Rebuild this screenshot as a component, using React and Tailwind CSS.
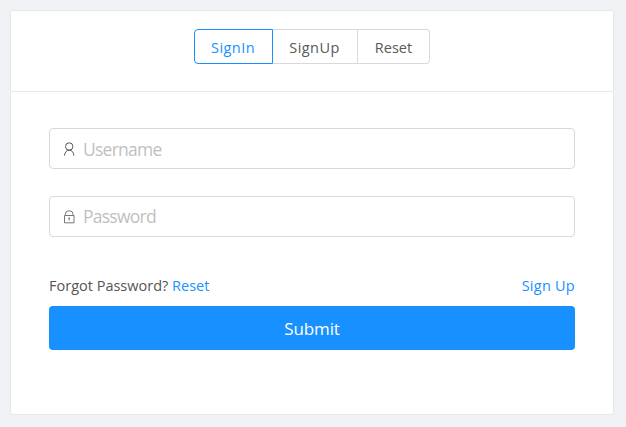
function UserIcon() {
  return (
    <svg className="h-[14px] w-[12px] shrink-0" viewBox="0 0 12 14" fill="none" stroke="#555" strokeWidth="1">
      <circle cx="6.200" cy="4.500" r="3.700" />
      <path d="M1.500 13.600C1.700 10.400 3.400 8.200 6.200 8.200s4.500 2.200 4.700 5.400" />
    </svg>
  );
}

function LockIcon() {
  return (
    <svg className="h-[14px] w-[12px] shrink-0" viewBox="0 0 12 14" fill="none" stroke="#777" strokeWidth="1">
      <path d="M1.500 5.500h9.500v7.300h-9.500z" />
      <path d="M2.300 5.500V4.600a3.900 3.900 0 0 1 7.800 0v0.900M6.200 8v2.600" />
      <path d="M5.400 8h1.600" />
    </svg>
  );
}

function Field({ icon, textClass, children }) {
  return (
    <div className="flex h-[41px] items-center rounded-[4px] border border-[#d9d9d9] pl-[13px]">
      {icon}
      <span className={`ml-2 text-[17.500px] leading-none tracking-[-0.750px] text-[#bfbfbf] ${textClass}`}>{children}</span>
    </div>
  );
}

export default function App() {
  return (
    <div className="h-[427px] w-[626px] bg-[#f0f2f5] pt-[10px] pl-[10px] font-['Open_Sans','Noto_Sans',sans-serif]">
      <div className="h-[405px] w-[604px] rounded-[2px] border border-[#e8e8e8] bg-white">
        <div className="flex h-[81px] justify-center border-b border-[#e8e8e8] pt-[18px] pr-[1px] text-[14.500px] font-medium tracking-[0.450px] text-[#595959]">
          <button className="h-[35px] w-[79px] rounded-l-[4px] border border-[#1890ff] pt-[3px] text-[#1890ff]">SignIn</button>
          <button className="h-[35px] w-[85px] border-y border-r border-[#d9d9d9] pt-[3px]">SignUp</button>
          <button className="h-[35px] w-[72px] rounded-r-[4px] border-y border-r border-[#d9d9d9] pt-[3px] pl-px tracking-[0]">Reset</button>
        </div>
        <div className="px-[38px] pt-[36px]">
          <Field icon={<UserIcon />} textClass="pt-[2px]">Username</Field>
          <div className="h-[27px]" />
          <Field icon={<LockIcon />} textClass="pt-0">Password</Field>
          <div className="mt-[38px] flex h-[22px] justify-between text-[14.500px] leading-[22px] text-[#555]">
            <span>Forgot Password? <a className="text-[#1890ff]">Reset</a></span>
            <a className="tracking-[0.250px] text-[#1890ff]">Sign Up</a>
          </div>
          <button className="mt-[9px] h-[44px] w-full rounded-[4px] bg-[#1890ff] pt-[2px] text-[17px] tracking-[-0.100px] text-white">Submit</button>
        </div>
      </div>
    </div>
  );
}
